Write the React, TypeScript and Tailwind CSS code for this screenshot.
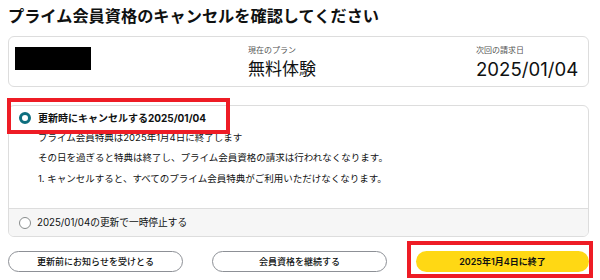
import React from 'react';

const font = { fontFamily: 'Inter, "Noto Sans CJK JP", "Noto Sans", sans-serif' };

const Radio = ({ checked }: { checked?: boolean }) =>
    checked ? (
        <span className="w-[12px] h-[12px] rounded-full border-[3.5px] border-[#0d6e7e] bg-white shrink-0" />
    ) : (
        <span className="w-[12px] h-[12px] rounded-full border border-[#888c8c] bg-white shrink-0" />
    );

const PlanColumn = ({ label, value, width, size }: { label: string; value: string; width?: string; size: string }) => (
    <div className={`flex flex-col pt-[8px] ${width ?? ''}`}>
        <span className="text-[8px] leading-[10px] text-[#555]">{label}</span>
        <span className={`mt-[3px] leading-[22px] text-[#0f1111] ${size}`}>{value}</span>
    </div>
);

export default function App() {
    return (
        <div className="relative w-[600px] h-[280px] overflow-hidden bg-white text-[#0f1111]" style={font}>
            <div className="ml-[8px] w-[581px]">
                <h1 className="pt-[6px] h-[26px] mb-[10px] text-[16.2px] leading-[20px] font-bold">
                    プライム会員資格のキャンセルを確認してください
                </h1>

                <div className="flex h-[51px] border border-[#dddddd] rounded-[6px] pl-[6px]">
                    <div className="w-[233px] pt-[10px]">
                        <div className="w-[76px] h-[23px] bg-black" />
                    </div>
                    <PlanColumn label="現在のプラン" value="無料体験" width="w-[228px]" size="text-[17px]" />
                    <PlanColumn label="次回の請求日" value="2025/01/04" size="text-[18.6px]" />
                </div>

                <div className="mt-[18px] border border-[#dddddd] rounded-[6px] overflow-hidden">
                    <div className="h-[103px] border-b border-[#dddddd] pt-[5px] pl-[10px]">
                        <div className="flex items-center h-[14px] gap-[7px]">
                            <Radio checked />
                            <span className="text-[10px] font-bold leading-[14px]">更新時にキャンセルする2025/01/04</span>
                        </div>
                        <div className="pl-[19px] text-[9.5px] leading-[14px]">
                            <p className="mt-[6px]">プライム会員特典は2025年1月4日に終了します</p>
                            <p className="mt-[6px]">その日を過ぎると特典は終了し、プライム会員資格の請求は行われなくなります。</p>
                            <p className="mt-[7px]">1. キャンセルすると、すべてのプライム会員特典がご利用いただけなくなります。</p>
                        </div>
                    </div>
                    <div className="flex items-center h-[27px] bg-[#f6f6f6] pl-[10px] gap-[6px]">
                        <Radio />
                        <span className="text-[9.7px] leading-[14px]">2025/01/04の更新で一時停止する</span>
                    </div>
                </div>

                <div className="flex gap-[29px] mt-[14px]">
                    <button className="flex-1 h-[21px] rounded-full border border-[#8d9096] bg-white text-[9px] font-medium">
                        更新前にお知らせを受けとる
                    </button>
                    <button className="flex-1 h-[21px] rounded-full border border-[#8d9096] bg-white text-[9px] font-medium">
                        会員資格を継続する
                    </button>
                    <button className="flex-1 h-[21px] rounded-full bg-[#ffd814] text-[9px] font-semibold">
                        2025年1月4日に終了
                    </button>
                </div>
            </div>

            {/* red annotation boxes */}
            <div className="absolute left-[7px] top-[98px] w-[223px] h-[36px] border-4 border-[#ee1c25]" />
            <div className="absolute left-[407px] top-[241px] w-[186px] h-[37px] border-4 border-[#ee1c25]" />
        </div>
    );
}
